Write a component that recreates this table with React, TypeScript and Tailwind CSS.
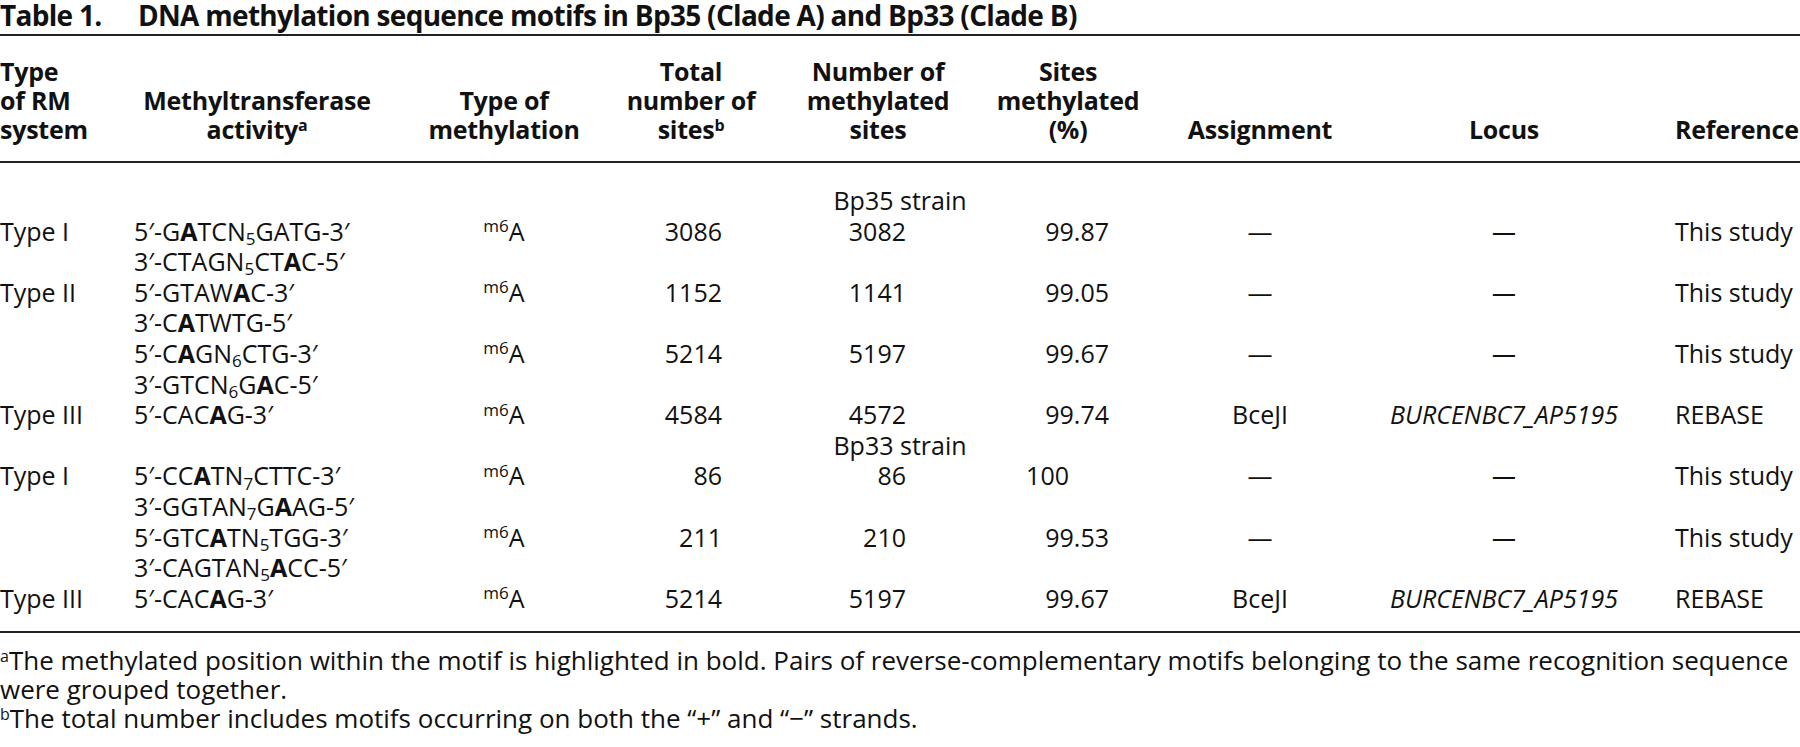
import React from "react"

type DataLine = {
  kind: "data"
  type?: string
  motif: string
  methyl?: boolean
  total?: string
  meth?: string
  pct?: string
  assign?: string
  locus?: string
  ref?: string
}
type StrainLine = { kind: "strain"; label: string }
type Line = DataLine | StrainLine

const lines: Line[] = [
  { kind: "strain", label: "Bp35 strain" },
  { kind: "data", type: "Type I", motif: "5′-G[A]TCN{5}GATG-3′", methyl: true, total: "3086", meth: "3082", pct: "99.87", assign: "—", locus: "—", ref: "This study" },
  { kind: "data", motif: "3′-CTAGN{5}CT[A]C-5′" },
  { kind: "data", type: "Type II", motif: "5′-GTAW[A]C-3′", methyl: true, total: "1152", meth: "1141", pct: "99.05", assign: "—", locus: "—", ref: "This study" },
  { kind: "data", motif: "3′-C[A]TWTG-5′" },
  { kind: "data", motif: "5′-C[A]GN{6}CTG-3′", methyl: true, total: "5214", meth: "5197", pct: "99.67", assign: "—", locus: "—", ref: "This study" },
  { kind: "data", motif: "3′-GTCN{6}G[A]C-5′" },
  { kind: "data", type: "Type III", motif: "5′-CAC[A]G-3′", methyl: true, total: "4584", meth: "4572", pct: "99.74", assign: "BceJI", locus: "BURCENBC7_AP5195", ref: "REBASE" },
  { kind: "strain", label: "Bp33 strain" },
  { kind: "data", type: "Type I", motif: "5′-CC[A]TN{7}CTTC-3′", methyl: true, total: "86", meth: "86", pct: "100", assign: "—", locus: "—", ref: "This study" },
  { kind: "data", motif: "3′-GGTAN{7}G[A]AG-5′" },
  { kind: "data", motif: "5′-GTC[A]TN{5}TGG-3′", methyl: true, total: "211", meth: "210", pct: "99.53", assign: "—", locus: "—", ref: "This study" },
  { kind: "data", motif: "3′-CAGTAN{5}[A]CC-5′" },
  { kind: "data", type: "Type III", motif: "5′-CAC[A]G-3′", methyl: true, total: "5214", meth: "5197", pct: "99.67", assign: "BceJI", locus: "BURCENBC7_AP5195", ref: "REBASE" },
]

// [X] = bold base, {n} = subscript
function Motif({ text }: { text: string }) {
  const parts = text.split(/(\[[^\]]+\]|\{[^}]+\})/)
  return (
    <>
      {parts.map((p, i) => {
        if (p.startsWith("[")) return <b key={i} className="font-bold">{p.slice(1, -1)}</b>
        if (p.startsWith("{")) return <sub key={i} className="text-[17px]">{p.slice(1, -1)}</sub>
        return <span key={i}>{p}</span>
      })}
    </>
  )
}

const cols = "grid grid-cols-[134px_246px_248px_126px_248px_132px_252px_236px_250px]"
const head = "flex flex-col items-center whitespace-nowrap"

export default function App() {
  return (
    <div className="w-[1800px] h-[747px] overflow-hidden bg-white text-[#111] font-['Open_Sans',sans-serif]">
      {/* Title */}
      <div className="text-[28px] leading-[30px] font-bold whitespace-nowrap tracking-[-0.025em]">
        <span className="inline-block w-[138px]">Table 1.</span>
        DNA methylation sequence motifs in Bp35 (Clade A) and Bp33 (Clade B)
      </div>

      <div className="mt-[4px] w-full border-t-2 border-[#222]" />

      {/* Header */}
      <div className={`${cols} items-end text-[25px] leading-[29px] font-bold tracking-[-0.01em] pt-[21px] pb-[17px]`}>
        <div className="whitespace-nowrap">Type<br />of RM<br />system</div>
        <div className={head}><span>Methyltransferase</span><span>activity<sup className="text-[16px] font-bold">a</sup></span></div>
        <div className={head}><span>Type of</span><span>methylation</span></div>
        <div className={head}><span>Total</span><span>number of</span><span>sites<sup className="text-[16px] font-bold">b</sup></span></div>
        <div className={head}><span>Number of</span><span>methylated</span><span>sites</span></div>
        <div className={head}><span>Sites</span><span>methylated</span><span>(%)</span></div>
        <div className={head}>Assignment</div>
        <div className={head}>Locus</div>
        <div className="pl-[53px] whitespace-nowrap">Reference</div>
      </div>

      <div className="w-full border-t-2 border-[#222]" />

      {/* Body */}
      <div className="pt-[22px] pb-[18px] text-[25px] leading-[30.6px]">
        {lines.map((l, i) =>
          l.kind === "strain" ? (
            <div key={i} className="w-[1800px] text-center">{l.label}</div>
          ) : (
            <div key={i} className={cols}>
              <div className="whitespace-nowrap">{l.type}</div>
              <div className="whitespace-nowrap"><Motif text={l.motif} /></div>
              <div className="text-center">
                {l.methyl && (<><sup className="text-[17px]">m6</sup>A</>)}
              </div>
              <div className="text-right pr-[32px]">{l.total}</div>
              <div className="text-right pr-[96px]">{l.meth}</div>
              <div className={`text-right whitespace-nowrap ${l.pct === "100" ? "pr-[65px]" : "pr-[25px]"}`}>{l.pct}</div>
              <div className="text-center">{l.assign}</div>
              <div className="flex justify-center italic whitespace-nowrap">{l.locus}</div>
              <div className="pl-[53px] whitespace-nowrap">{l.ref}</div>
            </div>
          )
        )}
      </div>

      <div className="w-full border-t-2 border-[#222]" />

      {/* Footnotes */}
      <div className="pt-[13px] text-[26px] leading-[29px] whitespace-nowrap">
        <div><sup className="text-[16px]">a</sup>The methylated position within the motif is highlighted in bold. Pairs of reverse-complementary motifs belonging to the same recognition sequence</div>
        <div>were grouped together.</div>
        <div><sup className="text-[16px]">b</sup>The total number includes motifs occurring on both the “+” and “−” strands.</div>
      </div>
    </div>
  )
}
